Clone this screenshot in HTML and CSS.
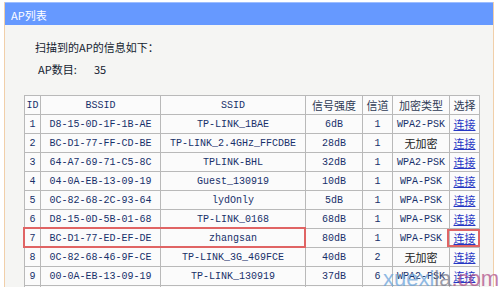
FILE: index.html
```html
<!DOCTYPE html>
<html lang="zh-CN">
<head>
    <meta charset="UTF-8">
    <title>AP列表</title>
    <link rel="stylesheet" href="styles.css">
</head>
<body>
    <div class="panel">
        <div class="panel-title">AP列表</div>
        <div class="panel-body">
            <p class="intro">扫描到的AP的信息如下：</p>
            <p class="count"><span class="count-label">AP数目:</span><span>35</span></p>

            <div class="table-wrap">
                <table class="ap-table">
                    <colgroup>
                        <col class="c-id">
                        <col class="c-bssid">
                        <col class="c-ssid">
                        <col class="c-signal">
                        <col class="c-channel">
                        <col class="c-enc">
                        <col class="c-sel">
                    </colgroup>
                    <thead>
                        <tr>
                            <th>ID</th>
                            <th>BSSID</th>
                            <th>SSID</th>
                            <th class="cn">信号强度</th>
                            <th class="cn">信道</th>
                            <th class="cn">加密类型</th>
                            <th class="cn">选择</th>
                        </tr>
                    </thead>
                    <tbody>
                        <tr><td>1</td><td>D8-15-0D-1F-1B-AE</td><td>TP-LINK_1BAE</td><td>6dB</td><td>1</td><td>WPA2-PSK</td><td><a href="#">连接</a></td></tr>
                        <tr><td>2</td><td>BC-D1-77-FF-CD-BE</td><td>TP-LINK_2.4GHz_FFCDBE</td><td>28dB</td><td>1</td><td class="cn">无加密</td><td><a href="#">连接</a></td></tr>
                        <tr><td>3</td><td>64-A7-69-71-C5-8C</td><td>TPLINK-BHL</td><td>32dB</td><td>1</td><td>WPA2-PSK</td><td><a href="#">连接</a></td></tr>
                        <tr><td>4</td><td>04-0A-EB-13-09-19</td><td>Guest_130919</td><td>10dB</td><td>1</td><td>WPA-PSK</td><td><a href="#">连接</a></td></tr>
                        <tr><td>5</td><td>0C-82-68-2C-93-64</td><td>lydOnly</td><td>5dB</td><td>1</td><td>WPA-PSK</td><td><a href="#">连接</a></td></tr>
                        <tr><td>6</td><td>D8-15-0D-5B-01-68</td><td>TP-LINK_0168</td><td>68dB</td><td>1</td><td>WPA-PSK</td><td><a href="#">连接</a></td></tr>
                        <tr><td>7</td><td>BC-D1-77-ED-EF-DE</td><td>zhangsan</td><td>80dB</td><td>1</td><td>WPA-PSK</td><td><a href="#">连接</a></td></tr>
                        <tr><td>8</td><td>0C-82-68-46-9F-CE</td><td>TP-LINK_3G_469FCE</td><td>40dB</td><td>2</td><td class="cn">无加密</td><td><a href="#">连接</a></td></tr>
                        <tr><td>9</td><td>00-0A-EB-13-09-19</td><td>TP-LINK_130919</td><td>37dB</td><td>6</td><td>WPA2-PSK</td><td><a href="#">连接</a></td></tr>
                        <tr><td>&nbsp;</td><td></td><td></td><td></td><td></td><td></td><td></td></tr>
                    </tbody>
                </table>
                <!-- red marks over the selected row -->
                <div class="mark mark-row"></div>
                <div class="mark mark-link"></div>
            </div>
        </div>
    </div>
    <div class="watermark"><span class="wm-a">xuexi</span><span class="wm-b">la</span><span class="wm-c">.com</span></div>
</body>
</html>
```

FILE: styles.css
```css
body {
    margin: 0;
    padding: 0;
    background-color: #fff;
    font-family: "Noto Sans CJK SC", sans-serif;
    color: #222;
    overflow: hidden;
}

.panel {
    width: 488px;
    margin: 2px 0 0 4px;
    border-left: 1px solid #f1cfa9;
    border-right: 1px solid #f1cfa9;
}

.panel-title {
    height: 23px;
    line-height: 24px;
    padding-left: 6px;
    background-color: #6699ff;
    border-top: 1px solid #9dbdff;
    color: #fff;
    font-size: 11px;
    box-sizing: border-box;
}

.panel-body {
    height: 262px;
    background-color: #f5f5f3;
    padding: 13px 0 0 19px;
    box-sizing: border-box;
}

.intro {
    margin: 0 0 0 11px;
    font-size: 11px;
    line-height: 18px;
    color: #141c30;
}

.count {
    margin: 4px 0 0 14px;
    font-size: 11px;
    line-height: 18px;
    color: #141c30;
}

.count-label {
    display: inline-block;
    width: 56px;
}

.table-wrap {
    position: relative;
    margin-top: 17px;
    width: 455px;
}

.ap-table {
    border-collapse: collapse;
    table-layout: fixed;
    width: 455px;
    font-family: "Liberation Mono", "Noto Sans CJK SC", monospace;
    font-size: 10px;
    color: #17306a;
    background-color: #fbfbfb;
}

.c-id { width: 16px; }
.c-bssid { width: 120px; }
.c-ssid { width: 145px; }
.c-signal { width: 57px; }
.c-channel { width: 30px; }
.c-enc { width: 57px; }
.c-sel { width: 30px; }

.ap-table tr {
    height: 19px;
}

.ap-table th,
.ap-table td {
    border: 1px solid #b9b9b9;
    padding: 0;
    text-align: center;
    font-weight: normal;
    white-space: nowrap;
    overflow: hidden;
}

.ap-table th.cn {
    font-family: "Noto Sans CJK SC", sans-serif;
    font-size: 11px;
    color: #2e3a55;
}

.ap-table td.cn {
    font-family: "Noto Sans CJK SC", sans-serif;
    font-size: 11px;
    color: #222;
}

.ap-table a {
    font-family: "Noto Sans CJK SC", sans-serif;
    font-size: 11px;
    color: #2436c4;
}

.mark {
    position: absolute;
    border: 2px solid #e06464;
    box-sizing: border-box;
}

.mark-row {
    left: -1px;
    top: 132px;
    width: 283px;
    height: 21px;
}

.mark-link {
    left: 423px;
    top: 134px;
    width: 33px;
    height: 18px;
}

.watermark {
    position: absolute;
    left: 383px;
    top: 266px;
    font-family: "Liberation Sans", sans-serif;
    font-size: 22px;
    line-height: 26px;
    opacity: 0.75;
}

.wm-a { color: #6ba4dc; }
.wm-b { color: #7c7c8c; }
.wm-c { color: #b0528a; }
```
